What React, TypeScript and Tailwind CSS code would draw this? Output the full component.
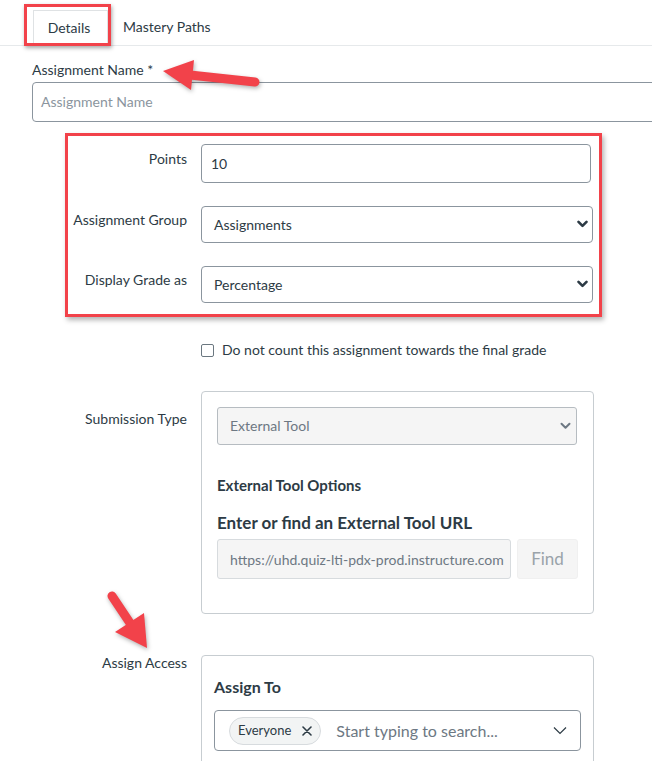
import React from "react";

const RED = "#f2424a";

function Chevron({ color = "#2d3b45", w = 2.6 }: { color?: string; w?: number }) {
  return (
    <svg width="11" height="8" viewBox="0 0 11 8" className="shrink-0">
      <path d="M1.5 1.8 L5.5 5.8 L9.5 1.8" fill="none" stroke={color} strokeWidth={w} strokeLinecap="round" strokeLinejoin="round" />
    </svg>
  );
}

export default function App() {
  return (
    <div
      className="relative w-[652px] h-[761px] overflow-hidden bg-white text-[#2d3b45] text-[14px]"
      style={{ fontFamily: "Lato, 'Noto Sans', sans-serif" }}
    >
      {/* Tabs */}
      <div className="relative h-[46px] border-b border-[#e6e9eb]">
        <div className="flex items-end h-full">
          <div className="ml-[24px] mb-[-1px] w-[87px] h-[42px] border-[3px] border-[#f2424a] shadow-[1px_2px_4px_rgba(0,0,0,0.35)] bg-white flex">
            <div className="ml-[6px] mt-[3px] w-[72px] flex-1 border-x border-t border-[#dfe2e4] flex items-center justify-center pr-[3px] text-[14px] text-[#2d3b45]">
              Details
            </div>
          </div>
          <div className="ml-[12px] h-full flex items-center pt-[8px] text-[14px] text-[#2d3b45]">Mastery Paths</div>
        </div>
      </div>

      {/* Assignment name */}
      <div className="pl-[32px] pt-[15px]">
        <div className="leading-[18px]">Assignment Name *</div>
        <div className="mt-[3px] w-[640px] h-[40px] border border-[#8b959e] rounded-[4px] flex items-center pl-[8px] pb-[2px] text-[#8b959e]">
          Assignment Name
        </div>
      </div>

      {/* Red box group */}
      <div className="ml-[65px] mt-[11px] w-[537px] h-[184px] border-[3px] border-[#f2424a] shadow-[2px_3px_5px_rgba(0,0,0,0.3)] pt-[8px] flex flex-col gap-[23px]">
        <div className="flex gap-[14px]">
          <div className="w-[119px] text-right pt-[6px] leading-[18px]">Points</div>
          <div className="w-[390px] h-[39px] border border-[#8b959e] rounded-[4px] flex items-center pl-[9px]">10</div>
        </div>
        <div className="flex gap-[14px]">
          <div className="w-[119px] text-right pt-[5px] leading-[18px] whitespace-nowrap">Assignment Group</div>
          <div className="w-[392px] h-[37px] border border-[#8b959e] rounded-[4px] flex items-center justify-between pl-[12px] pr-[4px] pb-[1px]">
            <span>Assignments</span>
            <Chevron />
          </div>
        </div>
        <div className="flex gap-[14px]">
          <div className="w-[119px] text-right pt-[5px] leading-[18px] whitespace-nowrap">Display Grade as</div>
          <div className="w-[392px] h-[37px] border border-[#8b959e] rounded-[4px] flex items-center justify-between pl-[12px] pr-[4px] pb-[1px]">
            <span>Percentage</span>
            <Chevron />
          </div>
        </div>
      </div>

      {/* checkbox */}
      <div className="ml-[201px] mt-[26px] flex items-center gap-[8px] h-[14px]">
        <div className="w-[13px] h-[13px] border border-[#6b7780] rounded-[2px] bg-white" />
        <span className="leading-[14px]">Do not count this assignment towards the final grade</span>
      </div>

      {/* Submission type */}
      <div className="flex mt-[34px]">
        <div className="w-[187px] text-right pt-[19px] leading-[18px]">Submission Type</div>
        <div className="ml-[14px] w-[393px] h-[223px] border border-[#c7cdd1] rounded-[4px] px-[15px] pt-[15px]">
          <div className="w-[360px] h-[38px] bg-[#f5f5f5] border border-[#b6bcc1] rounded-[3px] flex items-center justify-between pl-[12px] pr-[5px] pb-[1px] text-[#6d7883]">
            <span>External Tool</span>
            <Chevron color="#6d7883" w={2} />
          </div>
          <div className="mt-[31px] text-[15px] font-bold leading-[18px]">External Tool Options</div>
          <div className="mt-[19px] text-[17px] font-bold leading-[20px]">Enter or find an External Tool URL</div>
          <div className="mt-[6px] flex gap-[6px]">
            <div className="w-[294px] h-[40px] bg-[#f5f5f5] border border-[#d7dbde] rounded-[3px] flex items-center pl-[12px] pr-[4px] text-[14px] text-[#6d7883] whitespace-nowrap">
              <span>https://uhd.quiz-lti-pdx-prod.instructure.com</span>
            </div>
            <div className="w-[61px] h-[40px] bg-[#f5f5f5] border border-[#f0f0f0] rounded-[3px] flex items-center justify-center text-[17px] text-[#9aa3aa]">
              Find
            </div>
          </div>
        </div>
      </div>

      {/* Assign access */}
      <div className="flex mt-[41px]">
        <div className="w-[187px] text-right leading-[16px]">Assign Access</div>
        <div className="ml-[14px] w-[393px] h-[140px] border border-[#c7cdd1] rounded-[4px] px-[12px] pt-[22px]">
          <div className="text-[16px] font-bold leading-[18px]">Assign To</div>
          <div className="mt-[14px] w-[367px] h-[41px] border border-[#8b959e] rounded-[4px] flex items-center pl-[14px] pr-[13px]">
            <div className="h-[28px] px-[8px] rounded-full bg-[#f2f4f4] border border-[#d7dbde] flex items-center gap-[11px] text-[13px]">
              <span>Everyone</span>
              <svg width="10" height="10" viewBox="0 0 10 10">
                <path d="M1 1 L9 9 M9 1 L1 9" stroke="#2d3b45" strokeWidth="1.6" strokeLinecap="round" />
              </svg>
            </div>
            <span className="ml-[15px] text-[16px] text-[#6d7883] flex-1">Start typing to search...</span>
            <svg width="14" height="9" viewBox="0 0 14 9">
              <path d="M1 1.5 L7 7.5 L13 1.5" fill="none" stroke="#2d3b45" strokeWidth="1.2" />
            </svg>
          </div>
        </div>
      </div>

      {/* Annotation arrows */}
      <svg className="absolute left-0 top-0 pointer-events-none" width="652" height="761" style={{ filter: "drop-shadow(1px 2px 2px rgba(0,0,0,0.3))" }}>
        <line x1="190" y1="75" x2="255" y2="82" stroke={RED} strokeWidth="9" strokeLinecap="round" />
        <polygon points="163,71 194,60 191,90" fill={RED} />
        <line x1="112" y1="596" x2="132" y2="626" stroke={RED} strokeWidth="9" strokeLinecap="round" />
        <polygon points="115,632 144,613 147,648" fill={RED} />
      </svg>
    </div>
  );
}
